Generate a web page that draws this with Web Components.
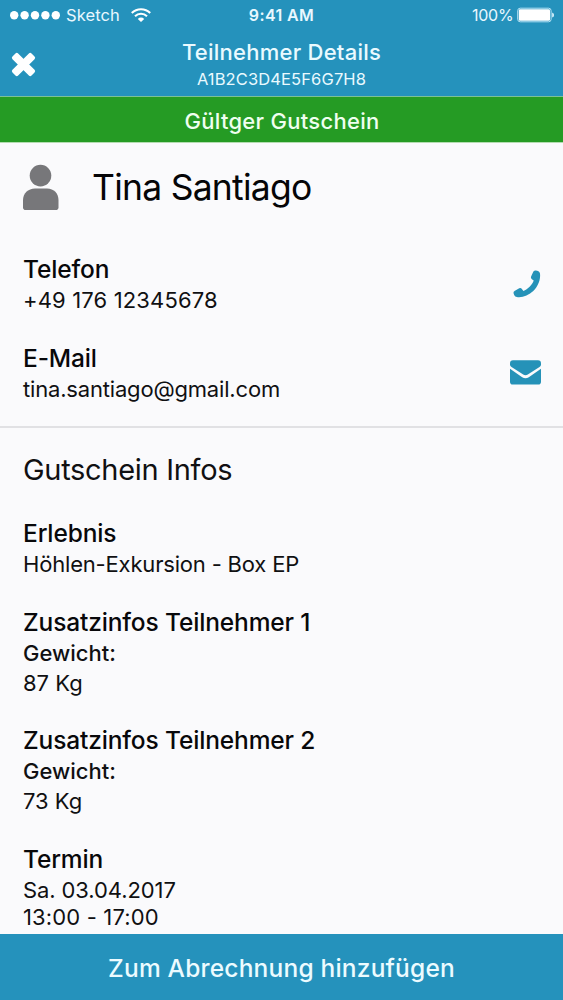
<!DOCTYPE html>
<html lang="de">
<head>
<meta charset="utf-8">
<meta name="viewport" content="width=device-width, initial-scale=1">
<title>Teilnehmer Details</title>
<style>
  body {
    margin: 0;
    font-family: Inter, "Liberation Sans", sans-serif;
    color: #101012;
    background: #fafafc;
  }
</style>
</head>
<body>
<participant-page>
  <status-bar slot="top" carrier="Sketch" time="9:41 AM" battery="100%"></status-bar>
  <nav-bar slot="top" heading="Teilnehmer Details" code="A1B2C3D4E5F6G7H8"></nav-bar>
  <voucher-state slot="top">Gültger Gutschein</voucher-state>

  <person-name>Tina Santiago</person-name>
  <info-group heading="Telefon" icon="phone">
    <info-line style="--spacing: 0.15px">+49 176 12345678</info-line>
  </info-group>
  <info-group heading="E-Mail" icon="mail">
    <info-line style="--spacing: -0.18px">tina.santiago@gmail.com</info-line>
  </info-group>
  <section-title>Gutschein Infos</section-title>
  <info-group heading="Erlebnis">
    <info-line style="--spacing: -0.18px">Höhlen-Exkursion - Box EP</info-line>
  </info-group>
  <info-group heading="Zusatzinfos Teilnehmer 1">
    <info-line strong>Gewicht:</info-line>
    <info-line>87 Kg</info-line>
  </info-group>
  <info-group heading="Zusatzinfos Teilnehmer 2">
    <info-line strong>Gewicht:</info-line>
    <info-line>73 Kg</info-line>
  </info-group>
  <info-group heading="Termin">
    <info-line style="--spacing: -0.1px">Sa. 03.04.2017</info-line>
    <info-line tight style="--spacing: 0.15px">13:00 - 17:00</info-line>
  </info-group>

  <action-button slot="bottom">Zum Abrechnung hinzufügen</action-button>
</participant-page>

<script>
const ICONS = {
  phone: `<svg width="28" height="28" viewBox="0 0 28 28" fill="currentColor">
    <path d="M20.4 1.6Q21.4.2 23 .5L25 1Q26.7 1.6 27 3.6C27.8 9.6 25 16.4 20.3 21.1C15.6 25.6 9.2 28 3.8 27.1Q2.1 26.8 1.3 25.2L.6 23.4Q.1 21.9 1.5 21L6.2 18.3Q7.7 17.6 8.7 18.8L10.4 21C14.8 19.4 19.2 15 20.7 10.6L18.6 8.9Q17.5 8 18.1 6.6Z"/>
  </svg>`,
  mail: `<svg width="31" height="25" viewBox="0 0 31 25" fill="currentColor">
    <path d="M3 .3H28Q31 .3 31 3.3V4.4Q31 5.9 29.5 6.9L17.8 14.6Q15.5 16.1 13.2 14.6L1.5 6.9Q0 5.9 0 4.4V3.3Q0 .3 3 .3Z"/>
    <path d="M0 8.8L12.2 17.2Q15.5 19.4 18.8 17.2L31 8.8V21.7Q31 24.5 28.2 24.5H2.8Q0 24.5 0 21.7Z"/>
  </svg>`
};

class ParticipantPage extends HTMLElement {
  constructor() {
    super();
    this.attachShadow({ mode: "open" }).innerHTML = `
      <style>
        :host {
          display: flex;
          flex-direction: column;
          height: 100vh;
          overflow: hidden;
        }
        header, footer { flex: none; }
        main {
          flex: 1;
          min-height: 0;
          overflow: hidden;
        }
      </style>
      <header><slot name="top"></slot></header>
      <main><slot></slot></main>
      <footer><slot name="bottom"></slot></footer>
    `;
  }
}

class StatusBar extends HTMLElement {
  connectedCallback() {
    this.attachShadow({ mode: "open" }).innerHTML = `
      <style>
        :host {
          display: grid;
          grid-template-columns: 1fr auto 1fr;
          align-items: center;
          height: 30px;
          padding: 0 8px 0 10px;
          background: #2592bc;
          color: #e9f8ff;
          font-size: 16.5px;
          line-height: 30px;
        }
        .left, .right { display: flex; align-items: center; }
        .right { justify-content: flex-end; }
        .dots { margin-right: 6px; }
        .carrier { letter-spacing: 0.1px; margin-right: 11.5px; }
        .time { font-size: 16px; font-weight: 600; letter-spacing: 0.4px; margin-right: 2px; }
        .right span { font-size: 16px; letter-spacing: -0.2px; margin-right: 3.5px; }
        svg { display: block; }
      </style>
      <div class="left">
        <svg class="dots" width="50" height="10" viewBox="0 0 50 10" fill="#fff">
          <circle cx="4.2" cy="5.3" r="4.2"/><circle cx="14.6" cy="5.3" r="4.2"/>
          <circle cx="25" cy="5.3" r="4.2"/><circle cx="35.4" cy="5.3" r="4.2"/>
          <circle cx="45.8" cy="5.3" r="4.2"/>
        </svg>
        <span class="carrier">${this.getAttribute("carrier")}</span>
        <svg width="20" height="14" viewBox="0 0 20 14" fill="none" stroke="#fff" stroke-width="2.1">
          <path d="M.8 5A13 13 0 0 1 19.2 5"/>
          <path d="M4 8.3A8.5 8.5 0 0 1 16 8.3"/>
          <path d="M6.8 10.9A4.6 4.6 0 0 1 13.2 10.9L10 14Z" fill="#fff" stroke="none"/>
        </svg>
      </div>
      <div class="time">${this.getAttribute("time")}</div>
      <div class="right">
        <span>${this.getAttribute("battery")}</span>
        <svg width="38" height="16" viewBox="0 0 38 16">
          <rect x=".7" y="1.2" width="33.4" height="13.6" rx="2.5" fill="none" stroke="#b5e2f5" stroke-width="1"/>
          <rect x="1.8" y="2.3" width="31.2" height="11.4" rx="1.2" fill="#fff"/>
          <path d="M35.2 5.5Q37 6 37 8T35.2 10.5Z" fill="#e0f5ff"/>
        </svg>
      </div>
    `;
  }
}

class NavBar extends HTMLElement {
  connectedCallback() {
    this.attachShadow({ mode: "open" }).innerHTML = `
      <style>
        :host {
          display: grid;
          grid-template-columns: 1fr auto 1fr;
          height: 66px;
          background: #2592bc;
          color: #eafaff;
          border-bottom: 1px solid #7cc196;
        }
        button {
          justify-self: start;
          align-self: start;
          margin: 22px 0 0 11px;
          padding: 0;
          border: 0;
          background: none;
        }
        svg { display: block; }
        .text { text-align: center; padding-top: 7px; }
        h1 {
          margin: 0;
          font-size: 22px;
          font-weight: 500;
          line-height: 30px;
          letter-spacing: 0.25px;
        }
        p {
          margin: 0;
          font-size: 16.5px;
          line-height: 24px;
          letter-spacing: 0.12px;
        }
      </style>
      <button aria-label="Schließen">
        <svg width="25" height="25" viewBox="0 0 25 25" fill="#fff">
          <rect x="-1" y="8.5" width="27" height="8" rx="1.9" transform="rotate(45 12.5 12.5)"/>
          <rect x="-1" y="8.5" width="27" height="8" rx="1.9" transform="rotate(-45 12.5 12.5)"/>
        </svg>
      </button>
      <div class="text">
        <h1>${this.getAttribute("heading")}</h1>
        <p>${this.getAttribute("code")}</p>
      </div>
    `;
  }
}

class VoucherState extends HTMLElement {
  constructor() {
    super();
    this.attachShadow({ mode: "open" }).innerHTML = `
      <style>
        :host {
          display: block;
          height: 46px;
          border-bottom: 1px solid #b4dcb1;
          box-sizing: border-box;
          background: #259b24;
          color: #effff0;
          text-align: center;
          font-size: 22px;
          font-weight: 500;
          line-height: 48px;
          letter-spacing: 0.28px;
          text-indent: 1px;
        }
      </style>
      <slot></slot>
    `;
  }
}

class PersonName extends HTMLElement {
  constructor() {
    super();
    this.attachShadow({ mode: "open" }).innerHTML = `
      <style>
        :host {
          display: flex;
          align-items: center;
          height: 88px;
          padding: 0 23px;
          margin-bottom: 21px;
          gap: 33px;
        }
        h2 {
          margin: 0;
          font-size: 35.5px;
          font-weight: 400;
          letter-spacing: -0.75px;
          color: #050507;
        }
      </style>
      <svg width="36" height="46" viewBox="0 0 36 46" fill="#77777a">
        <circle cx="17.5" cy="11.6" r="10.8"/>
        <path d="M12 24.5H24C31 24.5 35.5 29.5 35.5 36V43.2Q35.5 46 32.8 46H2.7Q0 46 0 43.2V36C0 29.5 5 24.5 12 24.5Z"/>
      </svg>
      <h2><slot></slot></h2>
    `;
  }
}

class SectionTitle extends HTMLElement {
  constructor() {
    super();
    this.attachShadow({ mode: "open" }).innerHTML = `
      <style>
        :host {
          display: block;
          border-top: 2px solid #e1e1e4;
          padding: 22px 23px 0;
          margin: -3px 0 26px;
        }
        h2 {
          margin: 0;
          font-size: 29px;
          font-weight: 400;
          line-height: 40px;
          letter-spacing: -0.3px;
        }
      </style>
      <h2><slot></slot></h2>
    `;
  }
}

class InfoGroup extends HTMLElement {
  connectedCallback() {
    const icon = this.getAttribute("icon");
    this.attachShadow({ mode: "open" }).innerHTML = `
      <style>
        :host {
          display: flex;
          justify-content: space-between;
          align-items: center;
          padding: 0 22px 0 23px;
          margin-bottom: 25.5px;
        }
        h3 {
          margin: 0;
          padding-top: 2px;
          font-size: 24.5px;
          font-weight: 500;
          line-height: 31px;
          letter-spacing: -0.14px;
          color: #08080a;
        }
        svg { display: block; color: #2592b8; }
      </style>
      <div>
        <h3>${this.getAttribute("heading")}</h3>
        <slot></slot>
      </div>
      ${icon ? ICONS[icon] : ""}
    `;
  }
}

class InfoLine extends HTMLElement {
  constructor() {
    super();
    this.attachShadow({ mode: "open" }).innerHTML = `
      <style>
        :host {
          display: block;
          font-size: 22px;
          line-height: 30px;
          letter-spacing: var(--spacing, 0);
        }
        :host([strong]) { font-weight: 500; }
        :host([tight]) { line-height: 24px; }
      </style>
      <slot></slot>
    `;
  }
}

class ActionButton extends HTMLElement {
  constructor() {
    super();
    this.attachShadow({ mode: "open" }).innerHTML = `
      <style>
        :host { display: block; }
        button {
          display: block;
          width: 100%;
          height: 66px;
          padding: 0;
          border: 0;
          background: #2592bc;
          color: #ecfbff;
          font: 500 24.5px/68px Inter, "Liberation Sans", sans-serif;
          letter-spacing: 0.2px;
        }
      </style>
      <button><slot></slot></button>
    `;
  }
}

customElements.define("participant-page", ParticipantPage);
customElements.define("status-bar", StatusBar);
customElements.define("nav-bar", NavBar);
customElements.define("voucher-state", VoucherState);
customElements.define("person-name", PersonName);
customElements.define("section-title", SectionTitle);
customElements.define("info-group", InfoGroup);
customElements.define("info-line", InfoLine);
customElements.define("action-button", ActionButton);
</script>
</body>
</html>
